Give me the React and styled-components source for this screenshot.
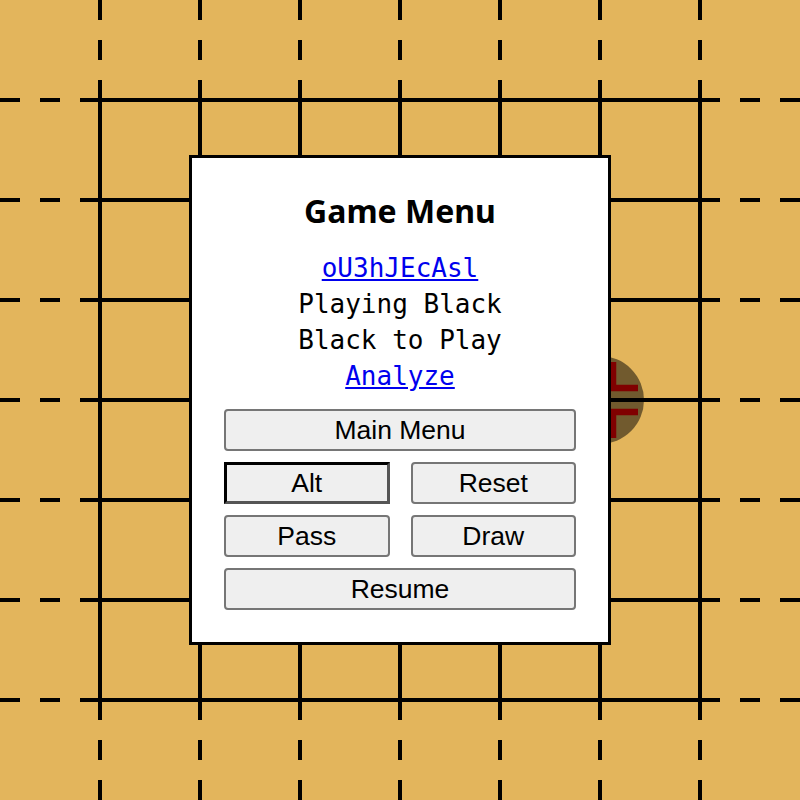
import React from 'react';
import styled, { createGlobalStyle } from 'styled-components';

const GlobalStyle = createGlobalStyle`
  html, body {
    margin: 0;
    padding: 0;
    overflow: hidden;
  }
`;

const Page = styled.div`
  position: relative;
  width: 100vw;
  height: 100vh;
  background: #e3b55c;
`;

const Board = styled.svg`
  position: absolute;
  inset: 0;
  display: block;
`;

const Overlay = styled.div`
  position: absolute;
  inset: 0;
  display: flex;
  align-items: center;
  justify-content: center;
`;

const Dialog = styled.div`
  box-sizing: border-box;
  width: 422px;
  padding: 31px 32px 32px;
  background: #fff;
  border: 3px solid #000;
`;

const Title = styled.h2`
  margin: 0;
  font-family: 'Noto Sans', sans-serif;
  font-size: 32px;
  font-weight: 700;
  line-height: 44px;
  text-align: center;
  color: #000;
`;

const Info = styled.div`
  margin-top: 17px;
  font-family: 'DejaVu Sans Mono', monospace;
  font-size: 26px;
  line-height: 36px;
  text-align: center;
  color: #000;
`;

const Line = styled.div``;

const Link = styled.a`
  color: #0000ee;
  text-decoration: underline;
  cursor: pointer;
`;

const Buttons = styled.div`
  margin-top: 15px;
  display: grid;
  grid-template-columns: 1fr 1fr;
  column-gap: 21px;
  row-gap: 11px;
`;

const Button = styled.button`
  grid-column: ${(p) => (p.$wide ? '1 / 3' : 'auto')};
  box-sizing: border-box;
  height: 42px;
  padding: 0;
  background: #efefef;
  color: #000;
  font-family: 'Liberation Sans', Arial, sans-serif;
  font-size: 26.5px;
  border: ${(p) => (p.$active ? '3px solid' : '2px solid #767676')};
  border-color: ${(p) => (p.$active ? '#000 #555 #555 #000' : '#767676')};
  border-radius: ${(p) => (p.$active ? '0' : '4px')};
  cursor: pointer;
`;

const coords = [100, 200, 300, 400, 500, 600, 700];

const GoBoard = () => (
  <Board width="800" height="800" viewBox="0 0 800 800">
    <g stroke="#000" strokeWidth="4" fill="none">
      {coords.map((c) => (
        <g key={c}>
          <line x1="100" y1={c} x2="700" y2={c} />
          <line x1="0" y1={c} x2="100" y2={c} strokeDasharray="20 20" />
          <line x1="700" y1={c} x2="800" y2={c} strokeDasharray="20 20" />
          <line x1={c} y1="100" x2={c} y2="700" />
          <line x1={c} y1="0" x2={c} y2="100" strokeDasharray="20 20" />
          <line x1={c} y1="700" x2={c} y2="800" strokeDasharray="20 20" />
        </g>
      ))}
    </g>
    <circle cx="600" cy="400" r="44" fill="rgba(0,0,0,0.5)" />
    {/* last move marker */}
    <g stroke="#800000" strokeWidth="6.5" fill="none" strokeLinejoin="miter">
      <path d="M613 362 V388 H638" />
      <path d="M587 362 V388 H562" />
      <path d="M613 438 V412 H638" />
      <path d="M587 438 V412 H562" />
    </g>
  </Board>
);

const App = () => {
  return (
    <Page>
      <GlobalStyle />
      <GoBoard />
      <Overlay>
        <Dialog>
          <Title>Game Menu</Title>
          <Info>
            <Line>
              <Link>oU3hJEcAsl</Link>
            </Line>
            <Line>Playing Black</Line>
            <Line>Black to Play</Line>
            <Line>
              <Link>Analyze</Link>
            </Line>
          </Info>
          <Buttons>
            <Button $wide>Main Menu</Button>
            <Button $active>Alt</Button>
            <Button>Reset</Button>
            <Button>Pass</Button>
            <Button>Draw</Button>
            <Button $wide>Resume</Button>
          </Buttons>
        </Dialog>
      </Overlay>
    </Page>
  );
};

export default App;
